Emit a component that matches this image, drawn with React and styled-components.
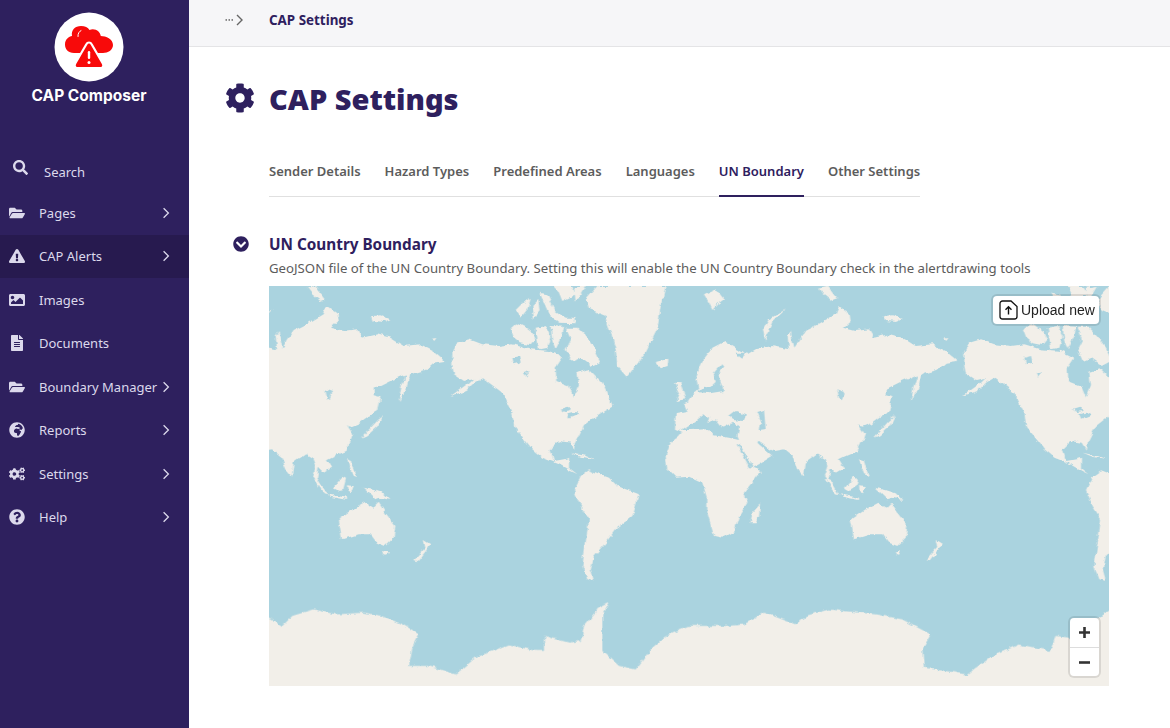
import React from "react";
import styled, { createGlobalStyle } from "styled-components";
import {
  FaSearch, FaFolderOpen, FaExclamationTriangle, FaImage, FaFileAlt,
  FaGlobeAfrica, FaCogs, FaQuestionCircle, FaCog, FaChevronCircleDown,
} from "react-icons/fa";

const Global = createGlobalStyle`
  html, body { margin: 0; padding: 0; background: #fff; }
  body { font-family: "Noto Sans", "Open Sans", sans-serif; }
  * { box-sizing: border-box; }
`;

const Shell = styled.div`
  display: flex;
  width: 1170px;
  height: 728px;
  overflow: hidden;
`;

const Sidebar = styled.aside`
  width: 189px;
  flex: none;
  background: #2e205e;
  color: #dcd9ec;
  display: flex;
  flex-direction: column;
`;

const Brand = styled.div`
  height: 150px;
  padding: 12px 11px 0 0;
  display: flex;
  flex-direction: column;
  align-items: center;
`;

const BrandName = styled.div`
  font-family: Inter, "Liberation Sans", sans-serif;
  font-weight: 700;
  font-size: 15.5px;
  line-height: 18px;
  color: #fff;
  margin-top: 5px;
  white-space: nowrap;
`;

const SearchRow = styled.div`
  height: 41px;
  display: flex;
  align-items: center;
  padding-left: 13px;
  font-size: 13px;
  gap: 16px;
  & > svg { font-size: 15px; margin-top: -7px; }
`;

const SearchLabel = styled.span`
  padding-top: 3px;
`;

const Menu = styled.nav`
  display: flex;
  flex-direction: column;
`;

const MenuRow = styled.div`
  height: 43.5px;
  display: flex;
  align-items: center;
  padding-left: 9px;
  font-size: 13px;
  background: ${(p) => (p.$active ? "#271a4f" : "transparent")};
`;

const MenuIcon = styled.span`
  width: 30px;
  flex: none;
  display: flex;
  font-size: 16px;
`;

const MenuLabel = styled.span`
  flex: 1;
  white-space: nowrap;
`;

const MenuChevron = styled.svg`
  width: 8px;
  height: 12px;
  flex: none;
  margin-right: 19px;
`;

const Main = styled.main`
  flex: 1;
  min-width: 0;
  display: flex;
  flex-direction: column;
`;

const TopBar = styled.header`
  height: 47px;
  flex: none;
  background: #f6f6f8;
  border-bottom: 1px solid #e4e4e6;
  display: flex;
  align-items: center;
  padding: 0 0 6px 36px;
  gap: 25px;
`;

const Crumb = styled.span`
  font-size: 13.4px;
  font-weight: 700;
  color: #2e205e;
`;

const TitleRow = styled.div`
  display: flex;
  align-items: center;
  padding: 30px 0 0 36px;
  gap: 14px;
  color: #2e205e;
  & > svg { font-size: 30px; margin-top: -2px; }
`;

const Title = styled.h1`
  margin: 0;
  font-size: 29px;
  line-height: 44px;
  font-weight: 900;
  color: #2e205e;
`;

const Tabs = styled.div`
  display: inline-flex;
  align-self: flex-start;
  gap: 24px;
  margin: 26px 0 0 80px;
  border-bottom: 1px solid #e0e0e0;
`;

const Tab = styled.div`
  height: 50px;
  display: flex;
  align-items: center;
  font-size: 13px;
  font-weight: 600;
  white-space: nowrap;
  margin-bottom: -1px;
  color: ${(p) => (p.$active ? "#2e205e" : "#5c5c5c")};
  border-bottom: 2px solid ${(p) => (p.$active ? "#2e205e" : "transparent")};
`;

const Section = styled.section`
  display: flex;
  margin: 36px 0 0 44px;
`;

const Toggle = styled.div`
  width: 36px;
  flex: none;
  color: #2e205e;
  font-size: 16px;
  padding-top: 3px;
  display: flex;
`;

const Body = styled.div`
  display: flex;
  flex-direction: column;
  width: 840px;
`;

const SectionTitle = styled.h2`
  margin: 0;
  font-size: 15.3px;
  line-height: 22px;
  font-weight: 700;
  color: #2e205e;
`;

const Help = styled.p`
  margin: 0 0 7px;
  padding-top: 2px;
  font-size: 13.2px;
  line-height: 22px;
  color: #5c5c5c;
  white-space: nowrap;
`;

const MapBox = styled.div`
  position: relative;
  width: 840px;
  height: 400px;
  overflow: hidden;
  background: #aad3df;
`;

const MapSvg = styled.svg`
  display: block;
  width: 840px;
  height: 400px;
`;

const Upload = styled.div`
  position: absolute;
  top: 10px;
  right: 10px;
  height: 28px;
  width: 106px;
  background: #fff;
  border-radius: 4px;
  box-shadow: 0 0 0 2px rgba(0, 0, 0, 0.1);
  display: flex;
  align-items: center;
  gap: 3px;
  padding-left: 6px;
  font-family: "Liberation Sans", Arial, sans-serif;
  font-size: 14px;
  color: #222;
  white-space: nowrap;
`;

const Zoom = styled.div`
  position: absolute;
  right: 10px;
  bottom: 10px;
  width: 29px;
  background: #fff;
  border-radius: 4px;
  box-shadow: 0 0 0 2px rgba(0, 0, 0, 0.1);
  display: flex;
  flex-direction: column;
`;

const ZoomBtn = styled.div`
  height: 29px;
  display: flex;
  align-items: center;
  justify-content: center;
  & + & { border-top: 1px solid #ddd; }
`;

const Chevron = () => (
  <MenuChevron viewBox="0 0 8 12">
    <path d="M1.6 1.2 6.4 6l-4.8 4.8" fill="none" stroke="currentColor" strokeWidth="1.3" />
  </MenuChevron>
);

const items = [
  ["Pages", FaFolderOpen, true],
  ["CAP Alerts", FaExclamationTriangle, true, true],
  ["Images", FaImage, false],
  ["Documents", FaFileAlt, false],
  ["Boundary Manager", FaFolderOpen, true],
  ["Reports", FaGlobeAfrica, true],
  ["Settings", FaCogs, true],
  ["Help", FaQuestionCircle, true],
];

const tabs = ["Sender Details", "Hazard Types", "Predefined Areas", "Languages", "UN Boundary", "Other Settings"];

const Logo = () => (
  <svg width="70" height="70" viewBox="0 0 70 70">
    <circle cx="35" cy="35" r="34.5" fill="#fff" />
    <path
      fill="#f80a0a"
      d="M20 41 C14 41 11 37 11 32.5 C11 27 15 24.5 18 24 C17 18 21 14 27 14 C31 14 34 15.500 35.500 18 C38 16.500 42 17 44.500 19.500 C46 21 46.500 22.500 46.800 24 C52 24 59 27 59 33 C59 38 54 41 49 41 Z"
    />
    <path d="M24 24.500 C23.800 21.500 25 19.500 27 18.600" fill="none" stroke="#fff" strokeWidth="1" strokeLinecap="round" />
    <path
      fill="#f80a0a"
      stroke="#fff"
      strokeWidth="2.200"
      strokeLinejoin="round"
      d="M35 30.500 C36 30.500 37 31 37.500 32 L48.800 51.500 C50.200 54 48.800 56.200 46 56.200 L24 56.200 C21.200 56.200 19.800 54 21.200 51.500 L32.500 32 C33 31 34 30.500 35 30.500 Z"
    />
    <rect x="33.800" y="39" width="2.400" height="8" rx="1.200" fill="#fff" />
    <circle cx="35" cy="50.500" r="1.500" fill="#fff" />
  </svg>
);

const BreadArrow = () => (
  <svg width="19" height="12" viewBox="0 0 19 12">
    <g fill="#666">
      <rect x="0.5" y="5.2" width="1.5" height="1.5" />
      <rect x="3.5" y="5.2" width="1.5" height="1.5" />
      <rect x="6.5" y="5.2" width="1.5" height="1.5" />
    </g>
    <path d="M12 1 17 6l-5 5" fill="none" stroke="#666" strokeWidth="1.4" />
  </svg>
);

/* Map artwork, in 3x pixel units of the 840x400 view (one world is 1536 wide). */
const OLD_WORLD = [
  "M-70 510 L-55 470 -30 450 -20 438 -42 428 -40 385 -5 378 -15 352 0 345 15 322 28 312 22 270 40 225 70 185 110 165 150 190 175 205 200 190 250 180 300 190 296 150 305 135 316 185 350 135 390 115 440 85 450 60 482 85 485 105 462 125 500 135 540 130 555 155 600 145 640 155 680 180 730 175 770 195 805 225 770 230 745 252 700 265 680 320 665 345 672 310 686 265 640 285 590 310 590 325 610 330 600 375 575 390 545 412 520 422 510 418 528 445 522 462 505 495 470 510 450 520 465 545 440 560 425 545 420 575 445 615 430 600 408 570 418 540 410 520 385 505 350 530 345 572 330 555 310 510 285 490 255 495 230 485 210 465 205 470 250 510 210 535 190 545 215 555 165 620 175 650 150 690 135 735 100 755 75 750 55 680 55 640 40 590 0 572 -40 575 -65 550 Z",
  "M185 712 L190 680 213 655 210 690 200 712 Z",
  "M485 700 L530 670 565 650 590 665 605 650 625 680 655 720 650 755 625 780 600 770 580 745 545 745 495 760 490 730 Z",
  "M618 795 L635 795 630 806 622 805 Z",
  "M712 822 L745 785 740 762 760 775 745 797 722 826 Z",
  "M555 455 L575 432 600 405 618 390 605 418 572 448 Z",
  "M668 345 L678 305 694 268 690 300 Z",
  "M468 605 L495 572 507 578 500 605 485 615 Z",
  "M410 580 L420 580 450 625 440 622 Z",
  "M452 625 L510 635 510 642 460 632 Z",
  "M510 598 L530 600 522 622 512 618 Z",
  "M510 520 L525 525 530 545 540 570 525 565 518 545 Z",
  "M558 605 L590 612 620 622 640 642 610 635 595 640 575 620 Z",
  "M45 25 L80 8 105 40 85 55 70 72 60 50 Z",
  "M228 165 L222 130 240 100 290 70 250 108 238 135 Z",
  "M390 5 L415 0 445 40 430 45 405 25 Z",
  "M585 90 L610 88 640 100 620 108 590 105 Z",
  "M765 158 L778 156 772 165 Z",
  "M-45 290 L-25 292 -10 340 -40 345 -30 320 Z",
];

const OLD_WATER = [
  "M-22 432 L-5 420 20 405 45 385 60 395 55 415 80 400 100 425 130 410 152 420 145 450 150 462 120 455 75 448 55 430 0 432 Z",
  "M118 392 L140 375 170 385 165 405 130 402 Z",
  "M205 378 L225 372 230 430 212 432 216 405 Z",
  "M143 472 L150 472 190 540 182 545 Z",
  "M205 464 L215 468 250 495 232 492 Z",
  "M25 318 L45 302 62 305 80 288 74 262 100 232 106 240 88 268 96 292 104 315 62 322 Z",
  "M140 200 L170 200 160 215 Z",
  "M445 310 L468 318 458 340 450 335 Z",
];

const NEW_WORLD = [
  "M550 200 L565 170 600 160 640 175 690 180 730 175 780 190 840 195 880 215 860 245 862 285 900 300 915 335 930 300 925 260 960 250 1000 290 1030 360 990 385 945 420 920 470 918 492 905 470 870 465 845 490 855 525 885 520 900 515 900 545 925 565 905 555 870 535 820 515 790 490 735 420 730 380 700 320 640 275 615 290 590 315 545 330 600 290 612 278 585 285 555 265 550 240 Z",
  "M915 612 L935 570 960 553 1020 575 1045 600 1110 625 1090 690 1040 730 1010 770 975 810 965 850 975 885 955 880 940 840 960 700 935 660 Z",
  "M950 40 L985 0 1190 0 1175 60 1165 130 1130 200 1075 275 1045 240 1040 190 1010 90 960 70 Z",
  "M1160 228 L1198 218 1196 240 1175 247 Z",
  "M905 500 L950 510 975 520 935 512 Z",
  "M725 130 L745 112 770 125 790 140 800 160 785 178 755 172 735 155 Z",
  "M800 125 L830 120 845 150 835 185 810 190 805 160 Z",
  "M845 120 L885 122 880 150 860 190 850 165 Z",
  "M890 125 L925 125 950 150 975 185 993 225 965 240 930 215 905 225 890 190 905 160 Z",
  "M740 75 L770 45 785 35 775 70 755 95 Z",
  "M790 60 L810 40 815 75 795 100 Z",
  "M812 20 L835 25 860 75 890 95 915 95 920 112 870 110 840 85 Z",
  "M860 0 L905 0 920 25 880 45 870 20 Z",
  "M915 5 L950 0 920 50 Z",
];

const NEW_WATER = [
  "M875 368 L895 362 905 375 888 378 Z",
  "M895 385 L925 378 930 386 900 398 Z",
  "M730 215 L750 210 755 230 735 235 Z",
  "M765 262 L785 255 770 272 Z",
];

const ANTARCTICA =
  "M-20 985 L0 995 40 1020 70 990 135 970 200 985 285 980 340 990 400 1015 450 1045 430 1085 420 1140 480 1140 560 1165 620 1115 720 1075 800 1095 825 1095 825 1050 900 1070 935 1065 945 1020 990 965 1020 950 1000 985 1000 1095 1050 1140 1100 1150 1145 1090 1190 1050 1260 1020 1380 1020 1425 1015 1485 980 1580 1015 1610 990 1680 970 1820 985 1900 1000 1985 1045 1960 1090 1965 1145 2095 1165 2160 1115 2250 1075 2345 1095 2360 1050 2440 1060 2480 1000 2540 960 L2540 1230 L-20 1230 Z";

const WorldMap = () => (
  <MapSvg viewBox="0 0 2520 1200">
    <defs>
      <filter id="tile" x="-2%" y="-2%" width="104%" height="104%">
        <feTurbulence type="fractalNoise" baseFrequency="0.045" numOctaves="3" seed="7" result="noise" />
        <feDisplacementMap in="SourceGraphic" in2="noise" scale="16" xChannelSelector="R" yChannelSelector="G" />
        <feGaussianBlur stdDeviation="1.4" />
      </filter>
      <g id="old-land">
        {OLD_WORLD.map((d) => (
          <path key={d} d={d} fill="#f2efe9" />
        ))}
        {OLD_WATER.map((d) => (
          <path key={d} d={d} fill="#aad3df" />
        ))}
      </g>
      <g id="new-land">
        {NEW_WORLD.map((d) => (
          <path key={d} d={d} fill="#f2efe9" />
        ))}
        {NEW_WATER.map((d) => (
          <path key={d} d={d} fill="#aad3df" />
        ))}
      </g>
    </defs>
    <rect width="2520" height="1200" fill="#aad3df" />
    <g filter="url(#tile)">
      <use href="#old-land" x="-276" />
      <use href="#old-land" x="1260" />
      <use href="#new-land" x="0" />
      <use href="#new-land" x="1536" />
      <path d={ANTARCTICA} fill="#f2efe9" />
    </g>
  </MapSvg>
);

const UploadIcon = () => (
  <svg width="19" height="20" viewBox="0 0 19 20">
    <path
      d="M3.500 1h8.500l6 5.500V16.500a2.500 2.500 0 0 1-2.500 2.500h-12A2.500 2.500 0 0 1 1 16.500v-13A2.500 2.500 0 0 1 3.500 1Z"
      fill="none"
      stroke="#111"
      strokeWidth="1.300"
    />
    <path d="M9.500 14.500V7M6.500 9.800l3-3 3 3" fill="none" stroke="#111" strokeWidth="1.400" />
  </svg>
);

export default function App() {
  return (
    <Shell>
      <Global />
      <Sidebar>
        <Brand>
          <Logo />
          <BrandName>CAP Composer</BrandName>
        </Brand>
        <SearchRow>
          <FaSearch />
          <SearchLabel>Search</SearchLabel>
        </SearchRow>
        <Menu>
          {items.map(([label, Icon, chevron, active]) => (
            <MenuRow key={label} $active={active}>
              <MenuIcon>
                <Icon />
              </MenuIcon>
              <MenuLabel>{label}</MenuLabel>
              {chevron && <Chevron />}
            </MenuRow>
          ))}
        </Menu>
      </Sidebar>
      <Main>
        <TopBar>
          <BreadArrow />
          <Crumb>CAP Settings</Crumb>
        </TopBar>
        <TitleRow>
          <FaCog />
          <Title>CAP Settings</Title>
        </TitleRow>
        <Tabs>
          {tabs.map((t) => (
            <Tab key={t} $active={t === "UN Boundary"}>
              {t}
            </Tab>
          ))}
        </Tabs>
        <Section>
          <Toggle>
            <FaChevronCircleDown />
          </Toggle>
          <Body>
            <SectionTitle>UN Country Boundary</SectionTitle>
            <Help>GeoJSON file of the UN Country Boundary. Setting this will enable the UN Country Boundary check in the alertdrawing tools</Help>
            <MapBox>
              <WorldMap />
              <Upload>
                <UploadIcon />
                Upload new
              </Upload>
              <Zoom>
                <ZoomBtn>
                  <svg width="13" height="13" viewBox="0 0 13 13">
                    <path d="M6.500 1v11M1 6.500h11" stroke="#333" strokeWidth="2.600" />
                  </svg>
                </ZoomBtn>
                <ZoomBtn>
                  <svg width="13" height="13" viewBox="0 0 13 13">
                    <path d="M1 6.500h11" stroke="#333" strokeWidth="2.600" />
                  </svg>
                </ZoomBtn>
              </Zoom>
            </MapBox>
          </Body>
        </Section>
      </Main>
    </Shell>
  );
}
